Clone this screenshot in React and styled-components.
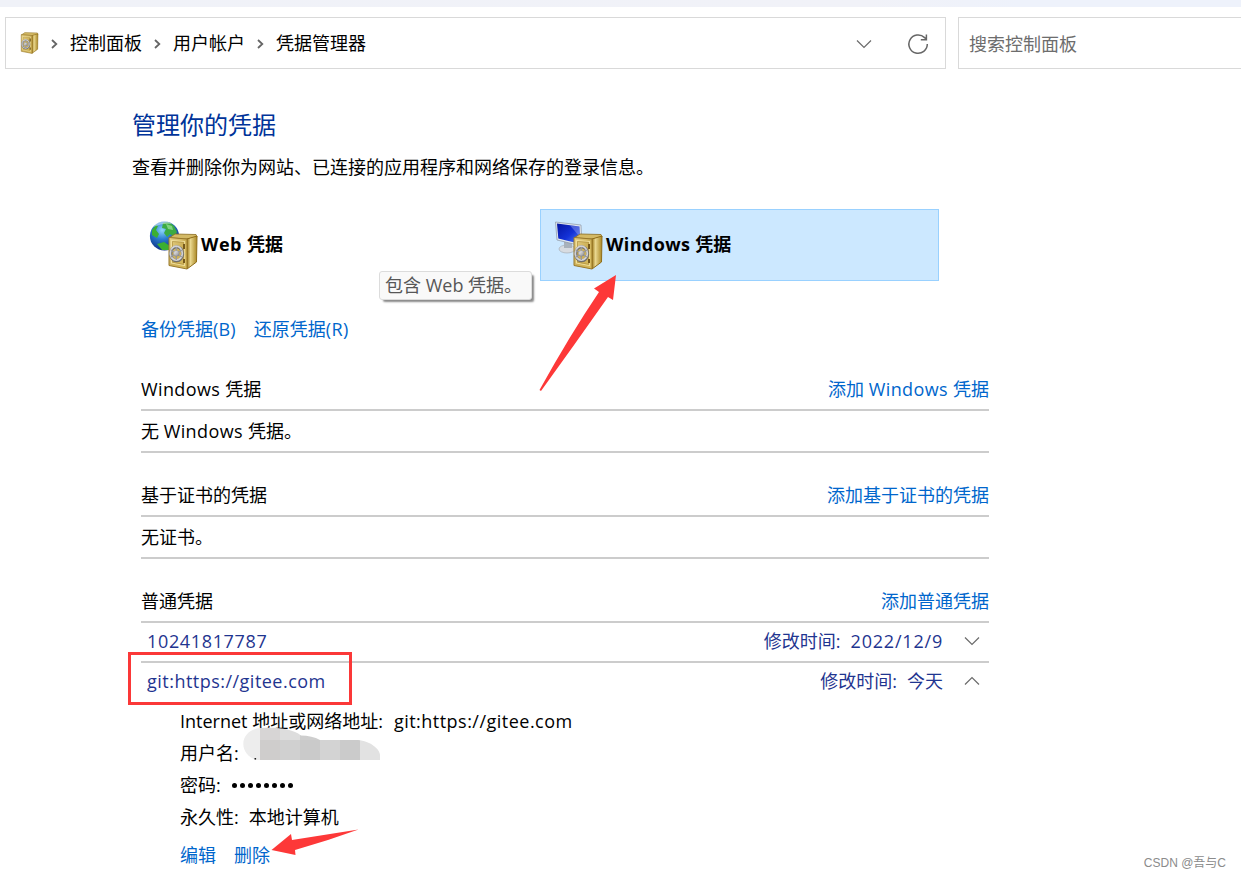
import React from "react";
import styled, { createGlobalStyle } from "styled-components";

const Global = createGlobalStyle`
  * { box-sizing: border-box; }
  body { margin: 0; background: #fff; }
`;

const Page = styled.div`
  position: relative;
  width: 1241px;
  height: 878px;
  overflow: hidden;
  background: #fff;
  color: #000;
  font: 18px/24px "Open Sans", "Noto Sans CJK SC", sans-serif;
  white-space: nowrap;
`;

const TopStrip = styled.div`
  height: 7px;
  background: linear-gradient(90deg, #f0f2f8 0%, #f1f2f8 70%, #eef2fb 82%, #eef2fb 100%);
`;

const Toolbar = styled.div`
  display: flex;
  gap: 12px;
  padding: 10px 0 0 5px;
`;

const Box = styled.div`
  display: flex;
  align-items: center;
  height: 52px;
  border: 1px solid #d9d9d9;
`;

const AddressBar = styled(Box)`
  width: 941px;
  padding: 1px 16px 0 13px;
`;

const SearchBox = styled(Box)`
  flex: 1;
  border-right: 0;
  padding: 1px 0 0 10px;
  color: #6d6d6d;
`;

const Crumb = styled.span`
  padding-bottom: 2px;
`;

const CrumbArrow = styled.svg`
  width: 7px;
  height: 10px;
  margin: 0 12px;
`;

const Spacer = styled.div`
  flex: 1;
`;

const SmallSafe = styled.svg`
  width: 20px;
  height: 22px;
  margin-bottom: 2px;
`;

const RefreshIcon = styled.svg`
  margin-left: 34px;
`;

const Main = styled.main`
  padding: 42px 0 0 132px;
`;

const Title = styled.h1`
  margin: 0;
  font-size: 24px;
  line-height: 28px;
  font-weight: 400;
  color: #003399;
`;

const Intro = styled.p`
  margin: 16px 0 0;
`;

const Tiles = styled.div`
  display: flex;
  gap: 5px;
  margin-top: 30px;
`;

const Tile = styled.div`
  display: flex;
  align-items: center;
  width: ${(p) => p.$width}px;
  height: 72px;
  padding-left: ${(p) => p.$pad}px;
  border: 1px solid ${(p) => (p.$selected ? "#99d1ff" : "transparent")};
  background: ${(p) => (p.$selected ? "#cce8ff" : "transparent")};
  font-weight: 700;
`;

const TileLabel = styled.span`
  padding-bottom: 2px;
`;

const TileIcon = styled.svg`
  width: 52px;
  height: 52px;
  flex: none;
`;

const Latin = styled.span`
  letter-spacing: ${(p) => p.$track ?? 0.38}px;
`;

const Content = styled.div`
  width: 848px;
  margin-left: 9px;
`;

const Links = styled.div`
  display: flex;
  gap: 18px;
  height: 44px;
  padding-top: 36px;
  margin-bottom: 44px;
`;

const Section = styled.section`
  margin-bottom: 22px;
`;

const Row = styled.div`
  display: flex;
  align-items: center;
  height: ${(p) => p.$height ?? 42}px;
  border-bottom: 2px solid #cccccc;
`;

const Link = styled.a`
  color: #0066cc;
`;

const Entry = styled(Row)`
  padding: 0 9px 2px 6px;
  border-bottom-color: ${(p) => (p.$open ? "transparent" : "#cccccc")};
  color: #1f3590;
`;

const Modified = styled.span`
  display: flex;
  gap: 10px;
  margin-left: auto;
  margin-right: 21px;
`;

const Details = styled.div`
  padding: 2px 0 0 39px;
`;

const Detail = styled.div`
  display: flex;
  align-items: center;
  gap: ${(p) => p.$gap ?? 11}px;
  height: ${(p) => p.$height ?? 32}px;
`;

const Dots = styled.span`
  display: flex;
  gap: 3px;
  padding-top: 1px;
  i { width: 5px; height: 5px; border-radius: 50%; background: #000; }
`;

const Tooltip = styled.div`
  position: absolute;
  left: 379px;
  top: 271px;
  width: 153px;
  height: 29px;
  padding: 1px 5px;
  border: 1px solid #dcdcdc;
  border-radius: 3px;
  background: #f9f9f9;
  color: #575757;
  box-shadow: 3px 3px 2px -1px #8a8a8a;
`;

const Highlight = styled.div`
  position: absolute;
  left: 128px;
  top: 652px;
  width: 224px;
  height: 53px;
  border: 3px solid #fb3838;
`;

const Overlay = styled.svg`
  position: absolute;
  left: 0;
  top: 0;
  pointer-events: none;
`;

const Watermark = styled.div`
  position: absolute;
  right: 15px;
  bottom: 6px;
  font: 12px/18px "Liberation Sans", "Noto Sans CJK SC", sans-serif;
  color: #8b8b8b;
`;

const Gradients = () => (
  <defs>
    <linearGradient id="front" x1="0" y1="0" x2="1" y2="1">
      <stop offset="0" stopColor="#e6d28a" /><stop offset=".5" stopColor="#cdb057" /><stop offset="1" stopColor="#d8bc5c" />
    </linearGradient>
    <linearGradient id="side" x1="0" y1="0" x2="1" y2="0">
      <stop offset="0" stopColor="#a07c1e" /><stop offset=".35" stopColor="#e9d78f" /><stop offset="1" stopColor="#a98622" />
    </linearGradient>
    <radialGradient id="globe" cx=".42" cy=".3" r=".7">
      <stop offset="0" stopColor="#8fd8fa" /><stop offset=".45" stopColor="#2a7bd0" /><stop offset="1" stopColor="#0d2f83" />
    </radialGradient>
    <linearGradient id="screen" x1="0" y1="0" x2="1" y2="1">
      <stop offset="0" stopColor="#0414a0" /><stop offset=".55" stopColor="#1432d8" /><stop offset="1" stopColor="#5a86f0" />
    </linearGradient>
    <linearGradient id="metal" x1="0" y1="0" x2="1" y2="1">
      <stop offset="0" stopColor="#fafafa" /><stop offset="1" stopColor="#85858a" />
    </linearGradient>
  </defs>
);

const Safe = () => (
  <g strokeLinejoin="round">
    <path d="M20 19 L26 15 L47 15.5 L48 18 L39 20 Z" fill="#d3b965" stroke="#8a6c20" strokeWidth=".8" />
    <path d="M38 20 L48 17 L47.5 43 L38 50 Z" fill="url(#side)" stroke="#8f6d19" strokeWidth="1" />
    <path d="M20 18.5 L38 20 L38 50 L20 46.5 Z" fill="url(#front)" stroke="#98782b" strokeWidth="1" />
    <path d="M22.5 21.5 L35.5 22.5 L35.5 46.5 L22.5 44 Z" fill="none" stroke="#f0df9c" strokeWidth="1.2" />
    <path d="M23.5 22.5 L34.7 23.4 L34.7 45.4 L23.5 43.2 Z" fill="none" stroke="#a88a39" strokeWidth=".6" />
    <path d="M35 25v5M35 40v4" stroke="#76591c" strokeWidth="2" />
    <ellipse cx="27.6" cy="34.7" rx="6" ry="7" fill="none" stroke="#6d6d6d" strokeWidth="3" />
    <ellipse cx="27.3" cy="34.2" rx="6" ry="7" fill="none" stroke="#d2d2d4" strokeWidth="1.8" />
    <path d="M27.3 28v13M21.8 31l11 7M32.8 31l-11 7" stroke="#99999d" strokeWidth="1.4" />
    <circle cx="27.4" cy="34.4" r="2.8" fill="url(#metal)" stroke="#777" strokeWidth=".4" />
  </g>
);

const Chevron = ({ up, w = 16 }) => (
  <svg width={w} height="10" viewBox="0 0 16 10" fill="none" stroke="#6b6b6b" strokeWidth="1.2">
    <path d={up ? "M1 8.5 8 1.5 15 8.5" : "M1 1.5 8 8.5 15 1.5"} />
  </svg>
);

const Separator = () => (
  <CrumbArrow viewBox="0 0 7 10" fill="none" stroke="#666" strokeWidth="1.8">
    <path d="M1 1 5.3 5 1 9" />
  </CrumbArrow>
);

export default function App() {
  return (
    <Page>
      <Global />
      <TopStrip />
      <Toolbar>
        <AddressBar>
          <SmallSafe viewBox="17.5 14 31 37"><Gradients /><Safe /></SmallSafe>
          <Separator />
          <Crumb>控制面板</Crumb>
          <Separator />
          <Crumb>用户帐户</Crumb>
          <Separator />
          <Crumb>凭据管理器</Crumb>
          <Spacer />
          <Chevron w={18} />
          <RefreshIcon width="22" height="22" viewBox="0 0 22 22" fill="none" stroke="#666" strokeWidth="1.5">
            <path d="M20.3 11A9.2 9.2 0 1 1 17.6 4.6L19.3 6.6M19.4 1.4V6.8H13.8" />
          </RefreshIcon>
        </AddressBar>
        <SearchBox>搜索控制面板</SearchBox>
      </Toolbar>

      <Main>
        <Title>管理你的凭据</Title>
        <Intro>查看并删除你为网站、已连接的应用程序和网络保存的登录信息。</Intro>
        <Tiles>
          <Tile $width={403} $pad={16}>
            <TileIcon viewBox="0 0 52 52">
              <circle cx="15.5" cy="17" r="14.6" fill="url(#globe)" />
              <path d="M14 4c5-2 8 0 11 3l3 6-3 5-4-3-3 3-3-4 2-4-4-1z" fill="#3bab43" />
              <path d="M3 11l4-5 2 1-2 4 3 4-2 4-5-3zM8 25l7-2 6 4-1 4-7 0z" fill="#3caf32" />
              <path d="M17 5l6 2 1 4-5-1z" fill="#9be49a" opacity=".7" />
              <path d="M4 8c5-7 14-8 19-3-6-1-12 0-19 3z" fill="#fff" opacity=".45" />
              <Safe />
            </TileIcon>
            <TileLabel><Latin $track={0.5}>Web </Latin>凭据</TileLabel>
          </Tile>
          <Tile $selected $width={399} $pad={13}>
            <TileIcon viewBox="0 0 52 52">
              <ellipse cx="13" cy="30" rx="8" ry="4" fill="#d8dce1" stroke="#a6adb5" strokeWidth=".7" />
              <path d="M10 22h8v7h-8z" fill="#a9b2bb" />
              <path d="M1.5 3 L27 6 L28 27 L3 21 Z" fill="#e1e7ee" stroke="#8995a5" strokeWidth=".7" />
              <path d="M3 4.5 L25.5 7.5 L26.5 25 L4.3 19.5 Z" fill="url(#screen)" />
              <path d="M16 6.5 L25.5 7.5 L26 18 Z" fill="#fff" opacity=".25" />
              <Safe />
            </TileIcon>
            <TileLabel><Latin>Windows </Latin>凭据</TileLabel>
          </Tile>
        </Tiles>

        <Content>
          <Links>
            <Link>备份凭据<Latin $track={0.2}>(B)</Latin></Link>
            <Link>还原凭据<Latin>(R)</Latin></Link>
          </Links>
          <Section>
            <Row><span><Latin>Windows </Latin>凭据</span><Spacer /><Link>添加 <Latin>Windows </Latin>凭据</Link></Row>
            <Row><span>无 <Latin>Windows </Latin>凭据。</span></Row>
          </Section>
          <Section>
            <Row>基于证书的凭据<Spacer /><Link>添加基于证书的凭据</Link></Row>
            <Row>无证书。</Row>
          </Section>
          <Section>
            <Row>普通凭据<Spacer /><Link>添加普通凭据</Link></Row>
            <Entry $height={40}>
              <Latin $track={0.65}>10241817787</Latin>
              <Modified><span>修改时间:</span><Latin $track={0.8}>2022/12/9</Latin></Modified>
              <Chevron />
            </Entry>
            <Entry $height={40} $open>
              <Latin $track={0.48}>git:https://gitee.com</Latin>
              <Modified><span>修改时间:</span><span>今天</span></Modified>
              <Chevron up />
            </Entry>
            <Details>
              <Detail><span>Internet 地址或网络地址:</span><Latin $track={0.48}>git:https://gitee.com</Latin></Detail>
              <Detail><span>用户名:</span></Detail>
              <Detail><span>密码:</span><Dots>{Array.from({ length: 8 }, (_, i) => <i key={i} />)}</Dots></Detail>
              <Detail $gap={10}><span>永久性:</span><span>本地计算机</span></Detail>
              <Detail $height={44} $gap={18}><Link>编辑</Link><Link>删除</Link></Detail>
            </Details>
          </Section>
        </Content>
      </Main>

      <Tooltip>包含 Web 凭据。</Tooltip>
      <Highlight />
      <Overlay width="1241" height="878">
        <clipPath id="smudge">
          <path d="M243.3 744C243.3 735 251 728 262 728C278 727 293 729 301 735.5C308 735.5 315 737 320 740H358C370 741 380 749 380 755V760H256C248 757 243.3 751 243.3 744Z" />
        </clipPath>
        <g clipPath="url(#smudge)" shapeRendering="crispEdges">
          <path d="M240 720h20v40h-20z" fill="#ededed" />
          <path d="M260 720h20v20h-20z" fill="#d7d5d5" />
          <path d="M280 720h20v20h-20z" fill="#dddddd" />
          <path d="M300 720h20v20h-20z" fill="#cecece" />
          <path d="M260 740h20v20h-20z" fill="#cfcdcc" />
          <path d="M280 740h20v20h-20z" fill="#d0d0d0" />
          <path d="M300 740h20v20h-20z" fill="#cacaca" />
          <path d="M320 740h20v20h-20z" fill="#d3d3d3" />
          <path d="M340 740h20v20h-20z" fill="#cbcbcb" />
          <path d="M360 740h20v20h-20z" fill="#e2e2e2" />
        </g>
        <path d="M254.5 758h1.6v1.6h-1.6z" fill="#222" />
        <path d="M616 275L594 288.5L599 292Q570 335 539.5 390L541 391Q575 344 608 297L613 300Z" fill="#fd3838" />
        <path d="M271.5 850L291 834L292 840L358.5 829.5Q327 841 295 850L295.5 855Z" fill="#fd3838" />
      </Overlay>
      <Watermark>CSDN @吾与C</Watermark>
    </Page>
  );
}
